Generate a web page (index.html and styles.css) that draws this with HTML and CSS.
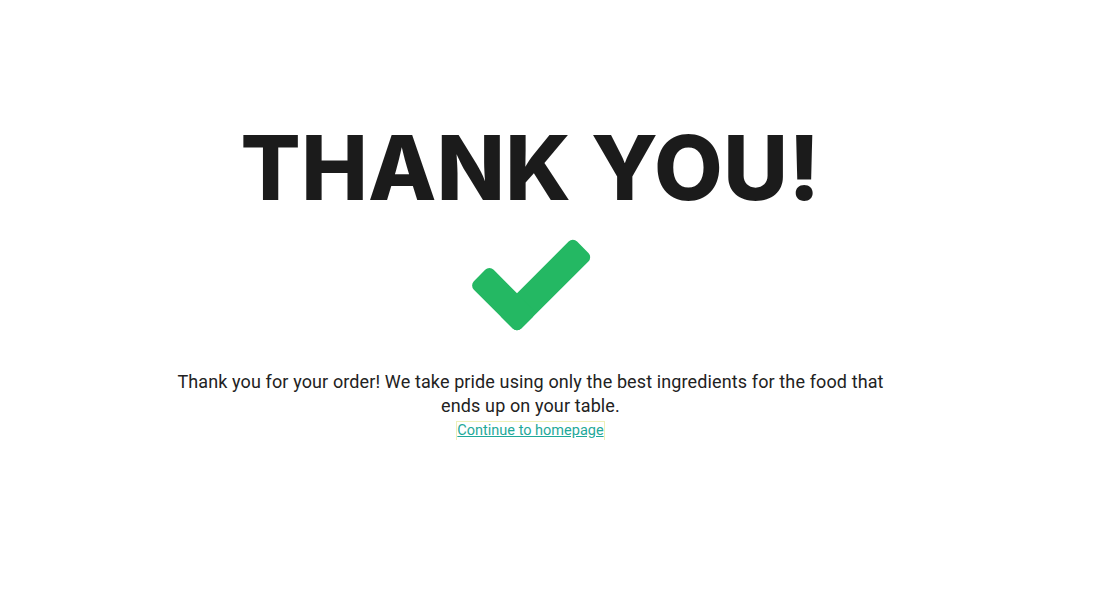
FILE: index.html
```html
<!DOCTYPE html>
<html lang="en">
<head>
<meta charset="utf-8">
<title>Thank you</title>
<link rel="stylesheet" href="styles.css">
</head>
<body>
<main class="thanks">
  <h1 class="thanks-title">THANK YOU!</h1>
  <svg class="thanks-check" width="124" height="98" viewBox="0 0 124 98" aria-hidden="true">
    <g transform="translate(48 76) rotate(-45)" fill="#24b863">
      <rect x="-14" y="-14" width="107" height="28" rx="6"/>
      <rect x="-14" y="-53" width="28" height="67" rx="6"/>
    </g>
  </svg>
  <p class="thanks-text">Thank you for your order! We take pride using only the best ingredients for the food that ends up on your table.</p>
  <a class="thanks-link" href="#">Continue to homepage</a>
</main>
</body>
</html>
```
FILE: styles.css
```css
html, body {
  margin: 0;
  padding: 0;
  background: #ffffff;
}

.thanks {
  width: 1061px;
  display: flex;
  flex-direction: column;
  align-items: center;
  padding-top: 115px;
  font-family: Roboto, "Liberation Sans", sans-serif;
  color: #222222;
  text-align: center;
}

.thanks-title {
  margin: 0;
  font-family: Inter, "Liberation Sans", sans-serif;
  font-weight: 800;
  font-size: 89px;
  line-height: 106px;
  color: #1b1b1b;
  letter-spacing: 0.3px;
}

.thanks-check {
  display: block;
  margin-top: 16px;
}

.thanks-text {
  margin: 35px 0 0;
  max-width: 730px;
  font-size: 18px;
  line-height: 24px;
  letter-spacing: 0.12px;
}

.thanks-link {
  margin-top: 4px;
  font-size: 14.5px;
  line-height: 18px;
  color: #1fa99a;
  text-decoration: underline;
  outline: 1px solid #eef0b8;
}
```
